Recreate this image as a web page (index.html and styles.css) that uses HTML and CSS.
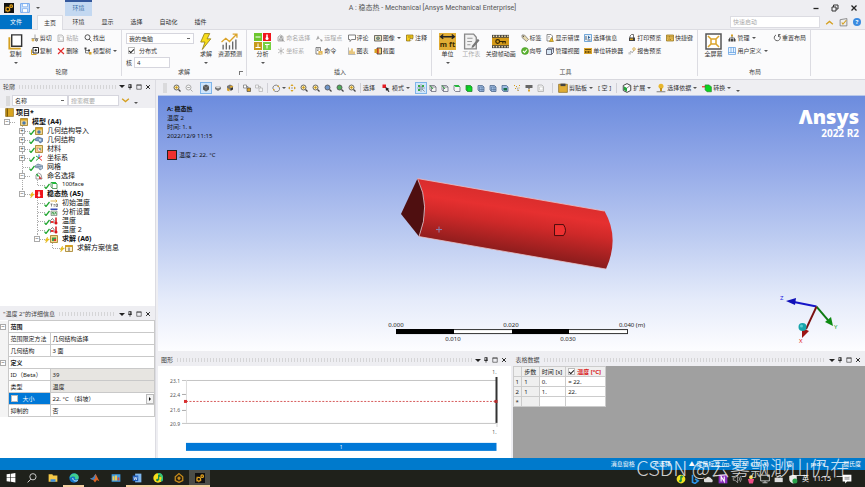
FILE: index.html
```html
<!DOCTYPE html>
<html lang="zh-CN">
<head>
<meta charset="utf-8">
<title>A : 稳态热 - Mechanical</title>
<link rel="stylesheet" href="styles.css">
</head>
<body>
<svg class="sprite" aria-hidden="true">
  <symbol id="app" viewBox="0 0 16 16"><rect width="16" height="16" fill="#111"/><g fill="none" stroke="#e8a51c" stroke-width="2"><circle cx="6" cy="10" r="3"/><circle cx="11.500" cy="5" r="2"/></g><path d="M2 7l2-1M2 13l2-1M6 15v-2M10 12l-1-1" stroke="#e8a51c"/></symbol>
  <symbol id="save" viewBox="0 0 16 16"><path d="M1 1h14v14H1z" fill="#cfe2fb" stroke="#6aa2ee" stroke-width="1.500"/><path d="M4 1h8v5H4zM4 9h8v6H4z" fill="#fff" stroke="#6aa2ee"/></symbol>
  <symbol id="pin" viewBox="0 0 16 16"><path d="M5 1h6v8H5zM3 9h10M8 9v6" fill="none" stroke="#222" stroke-width="2"/><path d="M9 2h2v7H9z" fill="#222"/></symbol>
  <symbol id="max" viewBox="0 0 16 16"><path d="M2 2h12v12H2zM2 3.500h12" fill="none" stroke="#333" stroke-width="1.600"/></symbol>
  <symbol id="close" viewBox="0 0 16 16"><path d="M3 3l10 10M13 3L3 13" stroke="#222" stroke-width="2.600"/></symbol>
  <symbol id="min" viewBox="0 0 16 16"><path d="M3 9h10" stroke="#222" stroke-width="2.600"/></symbol>
  <symbol id="restore" viewBox="0 0 16 16"><path d="M5 6V2h9v8h-4M2 6h8v8H2z" fill="none" stroke="#333" stroke-width="2"/></symbol>
  <symbol id="bigcopy" viewBox="0 0 32 36"><path d="M3 9v24h24" fill="none" stroke="#d5a021" stroke-width="4"/><path d="M8 4h21v24H8z" fill="#fff" stroke="#333" stroke-width="3"/></symbol>
  <symbol id="cut" viewBox="0 0 16 16"><path d="M8 1v8M1 9h14" stroke="#888" stroke-width="1.500"/><circle cx="4" cy="12" r="2" fill="none" stroke="#d5a021" stroke-width="2"/><circle cx="11" cy="12" r="2" fill="none" stroke="#555" stroke-width="2"/></symbol>
  <symbol id="paste" viewBox="0 0 16 16"><path d="M2 2h8l3 3v10H2z" fill="#f4f4f4" stroke="#aaa" stroke-width="1.500"/><path d="M5 6h7v6H5z" fill="#fff" stroke="#bbb"/></symbol>
  <symbol id="find" viewBox="0 0 16 16"><circle cx="7" cy="6.500" r="5" fill="none" stroke="#444" stroke-width="1.800"/><path d="M10.500 10.500L15 15" stroke="#444" stroke-width="2"/></symbol>
  <symbol id="copy" viewBox="0 0 16 16"><path d="M1 5v10h10" fill="none" stroke="#d5a021" stroke-width="2"/><path d="M4 1h11v11H4z" fill="#fff" stroke="#222" stroke-width="2"/><path d="M7 6.500h5M9.500 4v5" stroke="#222" stroke-width="2"/></symbol>
  <symbol id="del" viewBox="0 0 16 16"><path d="M2 3l12 11M14 2L2 14" stroke="#e22b2b" stroke-width="2.200"/></symbol>
  <symbol id="tree" viewBox="0 0 16 16"><path d="M3 4v8h8M3 7h6" fill="none" stroke="#555" stroke-width="1.500"/><path d="M1 1h4v4H1zM8 5h4v4H8z" fill="#444"/><path d="M10 10h5v5h-5z" fill="#d5a021"/></symbol>
  <symbol id="bolt" viewBox="0 0 24 32"><path d="M10 1h10l-5 10h7L6 31l5-14H3z" fill="#f7dc1a" stroke="#8d7a10" stroke-width="1.500"/></symbol>
  <symbol id="forecast" viewBox="0 0 32 32"><path d="M4 31V22M10 31V18M16 31V23M22 31V16M28 31V12" stroke="#666" stroke-width="2.500"/><path d="M1 17l8-7 7 6L29 3M22 2h8v7" fill="none" stroke="#dba42b" stroke-width="2.500"/></symbol>
  <symbol id="analysis" viewBox="0 0 34 34"><path d="M0 0h16v16H0z" fill="#6cc62e"/><path d="M18 0h16v16H18z" fill="#f0151c"/><path d="M0 18h16v16H0z" fill="#c79a1a"/><path d="M18 18h16v16H18z" fill="#76d042"/><path d="M3 8h10M22 23h9M26 23v8M3 29h10M8 21v8" stroke="#fff" stroke-width="2"/><path d="M26 3v7" stroke="#fff" stroke-width="3"/><circle cx="26" cy="11" r="3" fill="#fff"/></symbol>
  <symbol id="named" viewBox="0 0 16 16"><path d="M2 14V6l5-4 5 3v9z" fill="#eee" stroke="#999" stroke-width="1.500"/><path d="M5 12l3-8 3 8zM10 12l5 3" fill="none" stroke="#888" stroke-width="1.500"/></symbol>
  <symbol id="axes" viewBox="0 0 16 16"><path d="M8 1v14M2 4l12 8M14 4L2 12" stroke="#aaa" stroke-width="1.500"/></symbol>
  <symbol id="remote" viewBox="0 0 16 16"><path d="M2 12L6 3l3 6z" fill="#aaa"/><path d="M9 9l4 4" stroke="#999"/><circle cx="13" cy="13" r="2" fill="#999"/></symbol>
  <symbol id="cmd" viewBox="0 0 16 16"><path d="M2 1h9v13H2z" fill="#fff" stroke="#555" stroke-width="1.400"/><path d="M4 4h5M4 7h3" stroke="#555" stroke-width="1.400"/><path d="M7 8h8v7H7z" fill="#e0ad3a"/><path d="M9 10h4M9 13h4" stroke="#fff"/></symbol>
  <symbol id="comment" viewBox="0 0 16 16"><path d="M1 2h14v9H7l-3 4v-4H1z" fill="#fff" stroke="#555" stroke-width="1.500"/></symbol>
  <symbol id="chart" viewBox="0 0 16 16"><path d="M1 1v14h14" fill="none" stroke="#777"/><path d="M4 14V7M8 14V3M12 14V9" stroke="#dba42b" stroke-width="2.400"/></symbol>
  <symbol id="camera" viewBox="0 0 16 16"><path d="M1 3h14v11H1z" fill="#eee3bd" stroke="#444" stroke-width="1.500"/><circle cx="8" cy="8.500" r="3.500" fill="#3d6b8c"/><path d="M8 6v5M5.500 8.500h5" stroke="#e7c552"/></symbol>
  <symbol id="section" viewBox="0 0 16 16"><path d="M6 2h9v12H6z" fill="#f0d27a" stroke="#222" stroke-width="1.500"/><path d="M1 4h5v8H1z" fill="#d5a021"/><path d="M8 3v10" stroke="#c00" stroke-width="2"/></symbol>
  <symbol id="note" viewBox="0 0 16 16"><path d="M1 2h13v7l-6 5H1z" fill="#f5cd1f" stroke="#7c5d00" stroke-width="1.300"/><path d="M4 6h7M8 14V9h6" stroke="#5f4700" fill="#fff"/></symbol>
  <symbol id="units" viewBox="0 0 32 32"><path d="M0 0h32v32H0z" fill="#e1ad35"/><path d="M4 7h24M8 3L3 7l5 4M24 3l5 4-5 4" fill="none" stroke="#222" stroke-width="2.500"/></symbol>
  <symbol id="sheet" viewBox="0 0 32 32"><path d="M3 2h17l5 6v22H3z" fill="#f2f2f2" stroke="#888" stroke-width="2.500"/><path d="M8 10h10M8 16h9M8 22h6" stroke="#999" stroke-width="2"/><path d="M17 24L28 11l3 3-11 13-4 1z" fill="#777"/></symbol>
  <symbol id="film" viewBox="0 0 36 28"><path d="M0 0h36v28H0z" fill="#444"/><path d="M0 6h36v16H0z" fill="#d69b18"/><path d="M2 3h34M2 25h34" stroke="#f3dfaa" stroke-width="3" stroke-dasharray="3 3"/><circle cx="12" cy="14" r="4" fill="none" stroke="#332500" stroke-width="2.500"/><path d="M16 14h12v4M23 14v4" fill="none" stroke="#332500" stroke-width="2.500"/></symbol>
  <symbol id="tag" viewBox="0 0 16 16"><path d="M2 2l5 0 8 9-4 4-9-8z" fill="#e7d9ad" stroke="#777" stroke-width="1.500"/><circle cx="5" cy="5" r="1.300" fill="#555"/></symbol>
  <symbol id="ok" viewBox="0 0 16 16"><circle cx="8" cy="8" r="7" fill="#5cb531" stroke="#3a8a1d"/><path d="M4 8l3 3 5-6" fill="none" stroke="#fff" stroke-width="2.200"/></symbol>
  <symbol id="err" viewBox="0 0 16 16"><path d="M2 1h8l3 3v10H2z" fill="#fff" stroke="#666" stroke-width="1.400"/><path d="M4 5h4M4 8h3" stroke="#777"/><path d="M11 7l4 8H7z" fill="#f0c030" stroke="#8a6a00"/></symbol>
  <symbol id="view" viewBox="0 0 16 16"><path d="M1 5l4-3h10v9l-4 4H1z" fill="#d8e7f5" stroke="#445" stroke-width="1.500"/><path d="M1 5h10v10M11 5l4-3" fill="none" stroke="#445" stroke-width="1.500"/></symbol>
  <symbol id="info" viewBox="0 0 16 16"><path d="M1 1h14v14H1z" fill="#e4f0fc" stroke="#3e87c8" stroke-width="1.400"/><path d="M4 4v8M7 12h6" stroke="#333" stroke-width="1.500"/><path d="M8 3l5 5-3 0-2 3z" fill="#245c96"/></symbol>
  <symbol id="conv" viewBox="0 0 16 16"><path d="M0 2h16v12H0z" fill="#dba42b"/><path d="M2 5h12M3 8v4M6 8v4M9 8v4M12 8v4" stroke="#4a3500" stroke-width="1.500"/></symbol>
  <symbol id="print" viewBox="0 0 16 16"><path d="M4 8V4l3-3h4v7" fill="#fff" stroke="#444" stroke-width="1.500"/><path d="M2 7h12v7H2z" fill="#444"/><path d="M4 9h6v3H4z" fill="#d5a021"/></symbol>
  <symbol id="report" viewBox="0 0 16 16"><path d="M2 14l3-5 4 2 3-5" fill="none" stroke="#888" stroke-width="1.500"/><circle cx="12" cy="4" r="2.500" fill="none" stroke="#d5a021" stroke-width="1.500"/><path d="M1 10h5v5H1z" fill="#ccc"/></symbol>
  <symbol id="keys" viewBox="0 0 16 16"><path d="M1 2h14v12H1z" fill="#e8bd55" stroke="#8a6a10" stroke-width="1.400"/><path d="M3 5h10M3 8h10M5 11h6" stroke="#654b00" stroke-dasharray="2 1"/></symbol>
  <symbol id="full" viewBox="0 0 34 34"><path d="M2 2h30v30H2z" fill="#fff" stroke="#555" stroke-width="3"/><path d="M12 12h10v10H12zM6 6l6 6M28 6l-6 6M6 28l6-6M28 28l-6-6" fill="none" stroke="#dba42b" stroke-width="3"/></symbol>
  <symbol id="manage" viewBox="0 0 16 16"><path d="M6 1h4v4H6z" fill="#d5a021"/><path d="M8 5v4M3 12V8h10v4" fill="none" stroke="#444" stroke-width="1.500"/><path d="M1 10h4v5H1zM6 10h4v5H6zM11 10h4v5h-4z" fill="#444"/></symbol>
  <symbol id="layout" viewBox="0 0 16 16"><path d="M1 1h14v14H1zM1 11h14M6 1v10M11 1v10" fill="#eaf4ff" stroke="#5a9be0" stroke-width="1.400"/></symbol>
  <symbol id="reset" viewBox="0 0 16 16"><path d="M6 2a6 6 0 1 0 5 0M11 6V1h4" fill="none" stroke="#555" stroke-width="1.800"/></symbol>
  <symbol id="up" viewBox="0 0 16 16"><path d="M2 11l6-5 6 5" fill="none" stroke="#d5a021" stroke-width="2.400"/></symbol>
  <symbol id="tick" viewBox="0 0 16 16"><path d="M2 3l12-2v13H2z" fill="#eee" stroke="#777" stroke-width="1.400"/><path d="M5 8l2 3 6-7" fill="none" stroke="#d5a021" stroke-width="2"/></symbol>
  <symbol id="zin" viewBox="0 0 16 16"><circle cx="7" cy="7" r="5" fill="#f9e9ae" stroke="#555" stroke-width="1.700"/><path d="M4.500 7h5M7 4.500v5" stroke="#c79212" stroke-width="1.700"/><path d="M11 11l4 4" stroke="#444" stroke-width="2.300"/></symbol>
  <symbol id="zout" viewBox="0 0 16 16"><circle cx="7" cy="7" r="5" fill="#f5f5f5" stroke="#999" stroke-width="1.600"/><path d="M4.500 7h5M11 11l4 4" stroke="#999" stroke-width="1.700"/></symbol>
  <symbol id="zblue" viewBox="0 0 16 16"><circle cx="7" cy="7" r="5" fill="#6d94c8" stroke="#555" stroke-width="1.700"/><path d="M11 11l4 4" stroke="#444" stroke-width="2.300"/></symbol>
  <symbol id="zgreen" viewBox="0 0 16 16"><circle cx="7" cy="7" r="5" fill="#4faa5a" stroke="#555" stroke-width="1.700"/><path d="M11 11l4 4" stroke="#444" stroke-width="2.300"/></symbol>
  <symbol id="cube" viewBox="0 0 16 16"><path d="M8 1l6 3v7l-6 4-6-4V4z" fill="#555"/><path d="M2 4l6 3 6-3M8 7v8" fill="none" stroke="#aaa"/></symbol>
  <symbol id="cubes" viewBox="0 0 16 16"><path d="M2 6l6-2 6 2v4l-6 4-6-4z" fill="#777"/><path d="M2 6l6 3 6-3-6-2z" fill="#ddd"/></symbol>
  <symbol id="cubey" viewBox="0 0 16 16"><path d="M8 1l6 3v5l-6 3-6-3V4z" fill="#777"/><path d="M2 8l5 2v5l-5-2zM10 3l5 2-5 3-3-2z" fill="#dba42b"/><path d="M9 9l5-2v4l-5 3z" fill="#333"/></symbol>
  <symbol id="dupe" viewBox="0 0 16 16"><path d="M1 2h6v6H1zM7 5h3v3" fill="#fff" stroke="#666" stroke-width="1.300"/><path d="M8 8h7v7H8z" fill="#dba42b" stroke="#444" stroke-width="1.300"/></symbol>
  <symbol id="dupeg" viewBox="0 0 16 16"><path d="M1 2h6v6H1zM8 8h7v7H8zM7 5h4v3" fill="#f3f3f3" stroke="#aaa" stroke-width="1.300"/></symbol>
  <symbol id="rotate" viewBox="0 0 16 16"><path d="M2 10a6 6 0 0 1 10-6M14 6a6 6 0 0 1-10 7" fill="none" stroke="#777" stroke-width="1.800"/><path d="M14 2v4h-4zM2 14v-4h4z" fill="#d5a021"/></symbol>
  <symbol id="pan" viewBox="0 0 16 16"><path d="M8 0l3 4H5zM8 16l3-4H5zM0 8l4-3v6zM16 8l-4-3v6z" fill="#d5a021"/><path d="M7 7h2v2H7z" fill="#555"/></symbol>
  <symbol id="pick" viewBox="0 0 16 16"><path d="M1 1h7v7H1z" fill="#e51c23"/><path d="M7 6l8 4-3 1 3 4-2 1-3-4-2 2z" fill="#222"/></symbol>
  <symbol id="selg" viewBox="0 0 16 16"><path d="M2 2h4v4H2zM10 2h4v4h-4zM2 10h4v4H2z" fill="#39a845"/><path d="M8 1v14M1 8h14M10 10l5 5" stroke="#444" stroke-width="1.400" stroke-dasharray="2 1"/></symbol>
  <symbol id="wire" viewBox="0 0 16 16"><path d="M2 3h9l3 3v9H5l-3-3zM2 3l3 3v9M5 6h9" fill="#f4f4f4" stroke="#667" stroke-width="1.500"/><path d="M2 3l6 7" stroke="#39a845" stroke-width="2"/></symbol>
  <symbol id="top" viewBox="0 0 16 16"><path d="M2 3h9l3 3v9H5l-3-3z" fill="#f4f4f4" stroke="#667" stroke-width="1.500"/><path d="M2 2h9l3 4H5z" fill="#21b83a"/></symbol>
  <symbol id="solid" viewBox="0 0 16 16"><path d="M2 3h9l3 3v9H5l-3-3z" fill="#0bdc24" stroke="#267d2d" stroke-width="1.500"/><path d="M2 3l3 3h9M5 6v9" fill="none" stroke="#13962a"/></symbol>
  <symbol id="bluecube" viewBox="0 0 16 16"><path d="M2 3h9l3 3v9H5l-3-3z" fill="#9dbbe2" stroke="#49648a" stroke-width="1.500"/><path d="M5 6h9M5 6v9M5 11h9M10 6v9" stroke="#49648a"/></symbol>
  <symbol id="cyan" viewBox="0 0 16 16"><path d="M2 3h9l3 3v9H5l-3-3z" fill="#9dbbe2" stroke="#49648a" stroke-width="1.500"/><path d="M5 8h7v5H5z" fill="#176e48"/></symbol>
  <symbol id="wand" viewBox="0 0 16 16"><path d="M2 3h2M6 5h2M12 3h2M4 9h2M11 8h2M9 13h2" stroke="#d09a1a" stroke-width="2"/><path d="M8 7l3 7" stroke="#777"/></symbol>
  <symbol id="label" viewBox="0 0 16 16"><path d="M1 2h14v6h-5l-2 3-2-3H1z" fill="#666"/><path d="M6 11h4v4H6z" fill="#dba42b"/></symbol>
  <symbol id="clip" viewBox="0 0 16 16"><path d="M1 2h14v13H1z" fill="#e1ad35" stroke="#7a5b12"/><path d="M4 1h8v4H4z" fill="#444"/></symbol>
  <symbol id="extend" viewBox="0 0 16 16"><path d="M8 1l6 3v8l-6 3-6-3V4z" fill="#fff" stroke="#444" stroke-width="1.600"/><path d="M3 5l5 3v6l-5-3z" fill="#22a43a"/><path d="M8 8l5-4" stroke="#444"/></symbol>
  <symbol id="place" viewBox="0 0 16 16"><circle cx="8" cy="5" r="4" fill="#e8b62c"/><path d="M8 8v5" stroke="#c08c10" stroke-width="3"/><path d="M1 14h14" stroke="#777" stroke-width="1.500"/></symbol>
  <symbol id="convert" viewBox="0 0 16 16"><path d="M0 6h7" stroke="#e33" stroke-width="2"/><path d="M5 3h6l4 3v8H8l-3-3z" fill="#0bd420" stroke="#267d2d"/></symbol>
  <symbol id="proj" viewBox="0 0 16 16"><path d="M1 1h14v14H1z" fill="#d9a520" stroke="#805f0a"/><path d="M4 1v14" stroke="#6a4c00" stroke-width="2"/></symbol>
  <symbol id="model" viewBox="0 0 16 16"><path d="M1 1h14v14H1z" fill="#f1d48a" stroke="#9a7314" stroke-width="1.500"/><path d="M1 2h14v3H1z" fill="#d5a021"/><circle cx="8" cy="10" r="3.500" fill="#4979ac"/></symbol>
  <symbol id="mat" viewBox="0 0 16 16"><path d="M1 1h14v14H1z" fill="#f1d48a" stroke="#9a7314" stroke-width="1.500"/><path d="M4 6l5 1 3 5-5 1z" fill="#fff" stroke="#c55"/><circle cx="10" cy="8" r="2" fill="#5a9"/></symbol>
  <symbol id="geo" viewBox="0 0 16 16"><path d="M1 5l5-3 9 3v6l-5 3-2-4-7-1z" fill="#7c9fcb" stroke="#395a83" stroke-width="1.300"/><circle cx="10" cy="8" r="2" fill="#dce8f6"/></symbol>
  <symbol id="mesh" viewBox="0 0 16 16"><path d="M1 5l5-3 9 3v6l-5 3-2-4-7-1z" fill="#c6d4e5" stroke="#53708f" stroke-width="1.300"/><path d="M1 7h14M6 2v8M10 4v9" stroke="#53708f"/></symbol>
  <symbol id="coord" viewBox="0 0 16 16"><path d="M8 1v7" stroke="#2563d9" stroke-width="2"/><path d="M8 8l6 5M8 8l6-4" stroke="#e33" stroke-width="2"/><path d="M8 8l-6 5M8 8L2 4" stroke="#28a745" stroke-width="2"/></symbol>
  <symbol id="nsel" viewBox="0 0 16 16"><path d="M2 14V6l5-4 5 3 2 9z" fill="#fff" stroke="#777" stroke-width="1.500"/><path d="M3 4l4 5" stroke="#22a43a" stroke-width="2.500"/><path d="M8 7l6 7H8z" fill="#c44"/></symbol>
  <symbol id="face" viewBox="0 0 16 16"><path d="M2 3h9l3 3v9H5l-3-3z" fill="#fff" stroke="#287c32" stroke-width="1.500"/><path d="M2 2h9l3 4H5z" fill="#21b83a"/><path d="M5 6v9" stroke="#287c32"/></symbol>
  <symbol id="therm" viewBox="0 0 16 16"><path d="M0 0h16v16H0z" fill="#f0151c"/><path d="M8 3v7" stroke="#fff" stroke-width="3"/><circle cx="8" cy="11" r="2.500" fill="#fff"/></symbol>
  <symbol id="init" viewBox="0 0 16 16"><path d="M1 4h13M11 1l3 3-3 3" fill="none" stroke="#d5a021" stroke-width="1.500"/><path d="M1 10h4M3 10v5M7 11h3M7 14h3M12 10h3v5h-3z" fill="none" stroke="#555" stroke-width="1.300"/></symbol>
  <symbol id="settings" viewBox="0 0 16 16"><path d="M1 1h14v3H1z" fill="#3548b8"/><path d="M2 6h12v9H2z" fill="#dff0dd" stroke="#555"/><path d="M4 13V9h3v4M9 13l2-5 2 5" fill="none" stroke="#2f8f3b" stroke-width="1.500"/></symbol>
  <symbol id="temp" viewBox="0 0 16 16"><path d="M1 13V7l4-4 3 4v6" fill="#fff" stroke="#555" stroke-width="1.500"/><path d="M2 8h5v4H2z" fill="#e33"/><path d="M12 1v9" stroke="#d9151b" stroke-width="3"/><circle cx="12" cy="12" r="3" fill="#d9151b"/></symbol>
  <symbol id="sol" viewBox="0 0 16 16"><path d="M1 1h14v14H1z" fill="#f1d48a" stroke="#9a7314" stroke-width="1.500"/><path d="M4 5h8v7H4z" fill="#3d9c50"/><path d="M8 8h4v4H8z" fill="#d33"/></symbol>
  <symbol id="solinfo" viewBox="0 0 16 16"><path d="M1 3h14v12H1z" fill="#fff3cf" stroke="#9a7314" stroke-width="1.500"/><path d="M1 2h14v4H1z" fill="#d5a021"/><path d="M8 7v7" stroke="#556" stroke-width="2"/></symbol>
  <symbol id="chk" viewBox="0 0 12 12"><path d="M1 7l3 4 7-9" fill="none" stroke="#1fa52f" stroke-width="2.500"/></symbol>
  <symbol id="zap" viewBox="0 0 12 12"><path d="M7 0L2 7h3l-2 5 8-8H7z" fill="#f3c40f" stroke="#c99a00" stroke-width=".6"/></symbol>
</svg>

<header class="titlebar">
  <div class="quick">
    <svg class="i10"><use href="#app"/></svg>
    <button class="plain" aria-label="保存"><svg class="i10"><use href="#save"/></svg></button>
    <span class="caret"></span>
  </div>
  <div class="context">环境</div>
  <h1>A : 稳态热 - Mechanical [Ansys Mechanical Enterprise]</h1>
  <div class="winbtns">
    <button class="plain" aria-label="最小化"><svg class="i8"><use href="#min"/></svg></button>
    <button class="plain" aria-label="还原"><svg class="i8"><use href="#restore"/></svg></button>
    <button class="plain" aria-label="关闭"><svg class="i8"><use href="#close"/></svg></button>
  </div>
</header>

<nav class="tabs">
  <button class="tab file">文件</button>
  <button class="tab active">主页</button>
  <button class="tab">环境</button>
  <button class="tab">显示</button>
  <button class="tab">选择</button>
  <button class="tab">自动化</button>
  <button class="tab">插件</button>
  <div class="tabtools">
    <input class="launch" type="text" placeholder="快速启动" aria-label="快速启动">
    <svg class="i9"><use href="#up"/></svg>
    <svg class="i9"><use href="#tick"/></svg>
    <button class="plain help" aria-label="帮助">?</button>
  </div>
</nav>

<section class="ribbon">
  <div class="group g-outline">
    <div class="tools">
      <button class="big"><svg class="i17"><use href="#bigcopy"/></svg>复制<span class="caret"></span></button>
      <div class="stack"><button class="cmd"><svg class="i8"><use href="#cut"/></svg>剪切</button><button class="cmd"><svg class="i8"><use href="#copy"/></svg>复制</button></div>
      <div class="stack"><button class="cmd off"><svg class="i8"><use href="#paste"/></svg>粘贴</button><button class="cmd"><svg class="i8"><use href="#del"/></svg>删除</button></div>
      <div class="stack"><button class="cmd"><svg class="i8"><use href="#find"/></svg>找出</button><button class="cmd"><svg class="i8"><use href="#tree"/></svg>模型树<span class="caret"></span></button></div>
    </div>
    <div class="caption">轮廓</div>
  </div>
  <div class="group g-solve">
    <div class="tools">
      <div class="form">
        <select aria-label="求解位置"><option>我的电脑</option></select>
        <label class="dist"><input class="box" type="checkbox" checked>分布式</label>
        <label class="cores">核<input type="text" value="4"></label>
      </div>
      <button class="big"><svg class="i17"><use href="#bolt"/></svg>求解<span class="caret"></span></button>
      <button class="big"><svg class="i17"><use href="#forecast"/></svg>资源预测</button>
    </div>
    <div class="caption launcher">求解</div>
  </div>
  <div class="group g-insert">
    <div class="tools">
      <button class="big"><svg class="i17"><use href="#analysis"/></svg>分析<span class="caret"></span></button>
      <div class="stack"><button class="cmd off"><svg class="i8"><use href="#named"/></svg>命名选择</button><button class="cmd off"><svg class="i8"><use href="#axes"/></svg>坐标系</button></div>
      <div class="stack"><button class="cmd off"><svg class="i8"><use href="#remote"/></svg>远程点</button><button class="cmd"><svg class="i8"><use href="#cmd"/></svg>命令</button></div>
      <div class="stack"><button class="cmd"><svg class="i8"><use href="#comment"/></svg>评论</button><button class="cmd"><svg class="i8"><use href="#chart"/></svg>图表</button></div>
      <div class="stack"><button class="cmd"><svg class="i8"><use href="#camera"/></svg>图像<span class="caret"></span></button><button class="cmd"><svg class="i8"><use href="#section"/></svg>截面</button></div>
      <div class="stack"><button class="cmd"><svg class="i8"><use href="#note"/></svg>注释</button></div>
    </div>
    <div class="caption">插入</div>
  </div>
  <div class="group g-tools">
    <div class="tools">
      <button class="big"><svg class="i17" viewBox="0 0 32 32"><use href="#units"/><text x="16" y="27" class="mft">m ft</text></svg>单位<span class="caret"></span></button>
      <button class="big off"><svg class="i17"><use href="#sheet"/></svg>工作表</button>
      <button class="big"><svg class="i17"><use href="#film"/></svg>关键帧动画</button>
      <div class="stack"><button class="cmd"><svg class="i8"><use href="#tag"/></svg>标签</button><button class="cmd"><svg class="i8"><use href="#ok"/></svg>向导</button></div>
      <div class="stack"><button class="cmd"><svg class="i8"><use href="#err"/></svg>显示错误</button><button class="cmd"><svg class="i8"><use href="#view"/></svg>管理视图</button></div>
      <div class="stack"><button class="cmd"><svg class="i8"><use href="#info"/></svg>选择信息</button><button class="cmd"><svg class="i8"><use href="#conv"/></svg>单位转换器</button></div>
      <div class="stack"><button class="cmd"><svg class="i8"><use href="#print"/></svg>打印预览</button><button class="cmd"><svg class="i8"><use href="#report"/></svg>报告预览</button></div>
      <div class="stack"><button class="cmd"><svg class="i8"><use href="#keys"/></svg>快捷键</button></div>
    </div>
    <div class="caption">工具</div>
  </div>
  <div class="group g-layout">
    <div class="tools">
      <button class="big"><svg class="i17"><use href="#full"/></svg>全屏幕</button>
      <div class="stack"><button class="cmd"><svg class="i8"><use href="#manage"/></svg>管理<span class="caret"></span></button><button class="cmd"><svg class="i8"><use href="#layout"/></svg>用户定义<span class="caret"></span></button></div>
      <div class="stack"><button class="cmd"><svg class="i8"><use href="#reset"/></svg>重置布局</button></div>
    </div>
    <div class="caption">布局</div>
  </div>
</section>

<main class="work">
  <aside class="side">
    <section class="panel outline">
      <div class="phead"><h2>轮廓</h2><i class="dots"></i><span class="caret"></span><svg class="i8"><use href="#pin"/></svg><svg class="i8"><use href="#max"/></svg><svg class="i8"><use href="#close"/></svg></div>
      <div class="filter">
        <i class="grip"></i>
        <select aria-label="筛选"><option>名称</option></select>
        <input type="text" placeholder="搜索概要" aria-label="搜索概要">
        <svg class="i9 flip"><use href="#up"/></svg>
        <span class="caret"></span>
      </div>
      <div class="project"><svg class="i9"><use href="#proj"/></svg><b>项目*</b></div>
      <ul class="nodes root">
        <li><div class="row"><i class="exp">−</i><i class="st"></i><svg class="i8"><use href="#model"/></svg><b>模型 (A4)</b></div>
          <ul class="nodes">
            <li><div class="row"><i class="exp">+</i><svg class="st"><use href="#chk"/></svg><svg class="i8"><use href="#model"/></svg>几何结构导入</div></li>
            <li><div class="row"><i class="exp">+</i><svg class="st"><use href="#chk"/></svg><svg class="i8"><use href="#geo"/></svg>几何结构</div></li>
            <li><div class="row"><i class="exp">+</i><svg class="st"><use href="#chk"/></svg><svg class="i8"><use href="#mat"/></svg>材料</div></li>
            <li><div class="row"><i class="exp">+</i><svg class="st"><use href="#chk"/></svg><svg class="i8"><use href="#coord"/></svg>坐标系</div></li>
            <li><div class="row"><i class="exp leaf"></i><svg class="st"><use href="#chk"/></svg><svg class="i8"><use href="#mesh"/></svg>网格</div></li>
            <li><div class="row"><i class="exp">−</i><i class="st"></i><svg class="i8"><use href="#nsel"/></svg>命名选择</div>
              <ul class="nodes">
                <li><div class="row"><i class="exp leaf"></i><svg class="st"><use href="#chk"/></svg><svg class="i8"><use href="#face"/></svg><span class="latin">100face</span></div></li>
              </ul>
            </li>
            <li><div class="row"><i class="exp">−</i><svg class="st"><use href="#zap"/></svg><svg class="i8"><use href="#therm"/></svg><b>稳态热 (A5)</b></div>
              <ul class="nodes">
                <li><div class="row"><i class="exp leaf"></i><svg class="st"><use href="#chk"/></svg><svg class="i8"><use href="#init"/></svg>初始温度</div></li>
                <li><div class="row"><i class="exp leaf"></i><svg class="st"><use href="#chk"/></svg><svg class="i8"><use href="#settings"/></svg>分析设置</div></li>
                <li><div class="row"><i class="exp leaf"></i><svg class="st"><use href="#chk"/></svg><svg class="i8"><use href="#temp"/></svg>温度</div></li>
                <li><div class="row"><i class="exp leaf"></i><svg class="st"><use href="#chk"/></svg><svg class="i8"><use href="#temp"/></svg>温度 2</div></li>
                <li><div class="row"><i class="exp">−</i><svg class="st"><use href="#zap"/></svg><svg class="i8"><use href="#sol"/></svg><b>求解 (A6)</b></div>
                  <ul class="nodes">
                    <li><div class="row"><i class="exp leaf"></i><svg class="st"><use href="#zap"/></svg><svg class="i8"><use href="#solinfo"/></svg>求解方案信息</div></li>
                  </ul>
                </li>
              </ul>
            </li>
          </ul>
        </li>
      </ul>
    </section>
    <section class="panel details">
      <div class="phead"><h2>"温度 2"的详细信息</h2><i class="dots"></i><span class="caret"></span><svg class="i8"><use href="#pin"/></svg><svg class="i8"><use href="#max"/></svg><svg class="i8"><use href="#close"/></svg></div>
      <table class="props">
        <colgroup><col class="c-gut"><col class="c-key"><col></colgroup>
        <tr><td class="gut"><i class="exp">−</i></td><th colspan="2">范围</th></tr>
        <tr><td class="gut"></td><td>范围限定方法</td><td>几何结构选择</td></tr>
        <tr><td class="gut"></td><td>几何结构</td><td>3 面</td></tr>
        <tr><td class="gut"><i class="exp">−</i></td><th colspan="2">定义</th></tr>
        <tr><td class="gut"></td><td>ID（Beta）</td><td class="ro">39</td></tr>
        <tr><td class="gut"></td><td>类型</td><td class="ro">温度</td></tr>
        <tr><td class="gut"></td><td class="sel"><label><input class="box" type="checkbox">大小</label></td><td><div class="val">22. °C （斜坡）<button class="more" aria-label="更多"></button></div></td></tr>
        <tr><td class="gut"></td><td>抑制的</td><td>否</td></tr>
      </table>
    </section>
  </aside>

  <div class="stage">
    <div class="toolbar">
      <i class="grip"></i>
      <svg class="tb"><use href="#zin"/></svg><svg class="tb"><use href="#zout"/></svg>
      <i class="gap"></i>
      <svg class="tb on"><use href="#cube"/></svg><svg class="tb"><use href="#cubes"/></svg><svg class="tb"><use href="#cubey"/></svg>
      <i class="sep"></i>
      <svg class="tb"><use href="#dupe"/></svg><svg class="tb"><use href="#dupeg"/></svg>
      <i class="sep"></i>
      <svg class="tb"><use href="#rotate"/></svg><span class="caret"></span><svg class="tb"><use href="#pan"/></svg><svg class="tb"><use href="#zin"/></svg><svg class="tb"><use href="#zin"/></svg><svg class="tb"><use href="#zblue"/></svg><svg class="tb"><use href="#zgreen"/></svg><svg class="tb"><use href="#zin"/></svg>
      <i class="sep"></i>
      <span>选择</span><i class="gap"></i><svg class="tb"><use href="#pick"/></svg><button class="cmd">模式<span class="caret"></span></button>
      <i class="gap"></i>
      <svg class="tb on"><use href="#selg"/></svg><svg class="tb"><use href="#wire"/></svg><svg class="tb"><use href="#wire"/></svg><svg class="tb"><use href="#top"/></svg><svg class="tb"><use href="#solid"/></svg><svg class="tb"><use href="#bluecube"/></svg><svg class="tb"><use href="#bluecube"/></svg><svg class="tb"><use href="#cyan"/></svg><svg class="tb"><use href="#wand"/></svg><svg class="tb"><use href="#label"/></svg><svg class="tb"><use href="#paste"/></svg>
      <i class="sep wide"></i>
      <button class="cmd"><svg class="i10"><use href="#clip"/></svg>剪贴板<span class="caret"></span></button>
      <i class="gap"></i><span>[ 空 ]</span>
      <i class="sep wide"></i>
      <button class="cmd"><svg class="i10"><use href="#extend"/></svg>扩展<span class="caret"></span></button>
      <i class="gap"></i>
      <button class="cmd"><svg class="i10"><use href="#place"/></svg>选择依据<span class="caret"></span></button>
      <i class="gap"></i>
      <button class="cmd"><svg class="i10"><use href="#convert"/></svg>转换<span class="caret"></span></button>
      <i class="gap"></i><span class="caret low"></span>
    </div>

    <div class="viewport">
      <svg class="scene" viewBox="158 96 707 255">
        <defs>
          <linearGradient id="body" gradientUnits="userSpaceOnUse" x1="515" y1="194" x2="506" y2="253">
            <stop offset="0" stop-color="#d92d2d"/><stop offset=".25" stop-color="#e63030"/><stop offset=".5" stop-color="#cf2929"/><stop offset="1" stop-color="#8a1c1c"/>
          </linearGradient>
        </defs>
        <path d="M417.500 178.500L604.500 211Q620 238 606 269L419 236.500Q431 206 417.500 178.500Z" fill="url(#body)"/>
        <path d="M417.500 178.500L401 214L419 236.500Q431 206 417.500 178.500Z" fill="#4f0f10"/>
        <path d="M606 269L419 236.500Q431 206 417.500 178.500L604.500 211" fill="none" stroke="#e9c3c8" stroke-width=".8"/>
        <path d="M554.500 224.500h9q4 6 0 11h-9z" fill="#ee3131" stroke="#4c0c0c"/>
        <path d="M436 229.500h6M439 226.500v6" stroke="#8c7fb0"/>
        <rect x="396.500" y="329.500" width="231" height="4" fill="#fff" stroke="#333"/>
        <path d="M396 329h58v5h-58zM512 329h57v5h-57z"/>
        <g class="scale"><text x="396" y="327">0.000</text><text x="511" y="327">0.020</text><text x="632" y="327">0.040 (m)</text><text x="453" y="341">0.010</text><text x="568" y="341">0.030</text></g>
        <path d="M816.500 306.500L794 302" stroke="#1515c8" stroke-width="2"/><path d="M786 301l10-3-1 7z" fill="#1010b8"/>
        <path d="M816.500 306.500L828 320" stroke="#0d7a12" stroke-width="2"/><path d="M833 326l-8-4 6-5z" fill="#0d8a12"/>
        <path d="M816.500 306.500L806 329" stroke="#7a1010" stroke-width="2"/><path d="M802 338l0-10 7 3z" fill="#9c1414"/>
        <circle cx="802.500" cy="327" r="4" fill="#17a5ac"/><circle cx="801.500" cy="326" r="1.500" fill="#58cdd0"/>
        <g class="axis"><text x="780" y="300" fill="#2222e0">Z</text><text x="834" y="329" fill="#18a018">Y</text><text x="799" y="343" fill="#e02020">X</text></g>
      </svg>
      <div class="legend">
        <b>A: 稳态热</b><span>温度 2</span><span>时间: 1. s</span><span>2022/12/9 11:15</span>
        <div class="swatch"><i></i>温度 2: 22. °C</div>
      </div>
      <div class="brand"><strong>Λnsys</strong><span>2022 R2</span></div>
    </div>

    <div class="bottom">
      <section class="panel graph">
        <div class="phead"><h2>图形</h2><i class="dots"></i><span class="caret"></span><svg class="i8"><use href="#pin"/></svg><svg class="i8"><use href="#max"/></svg><svg class="i8"><use href="#close"/></svg></div>
        <svg class="plot" viewBox="158 366 353 92">
          <path d="M182 380.500h315M182 423.500h315" stroke="#c4c4c4"/>
          <path d="M182 394.500h4M182 410.500h4" stroke="#aaa"/><path d="M186.500 380v43" stroke="#ddd"/>
          <path d="M186 401.500h311" stroke="#d65a5a" stroke-dasharray="2 1.500"/>
          <rect x="184" y="400" width="3" height="3" fill="#d83030"/>
          <rect x="496" y="377" width="2" height="46" fill="#333"/><path d="M497.500 423v4" stroke="#ccc"/>
          <rect x="495" y="400" width="3" height="3" fill="#b02a2a"/>
          <rect x="186" y="443" width="311" height="8" fill="#0078d7"/>
          <g class="ticks"><text x="180" y="383">23.1</text><text x="180" y="397">22.4</text><text x="180" y="412">21.6</text><text x="180" y="426">20.9</text><text x="497" y="374">1.</text><text x="497" y="434">1.</text><text x="343" y="449" fill="#fff">1</text></g>
        </svg>
      </section>
      <section class="panel tabular">
        <div class="phead"><h2>表格数据</h2><i class="dots"></i><span class="caret"></span><svg class="i8"><use href="#pin"/></svg><svg class="i8"><use href="#max"/></svg><svg class="i8"><use href="#close"/></svg></div>
        <table class="data">
          <tr><th></th><th>步数</th><th>时间 [s]</th><th class="hot"><label><input class="box" type="checkbox" checked>温度 [°C]</label></th></tr>
          <tr><th>1</th><td class="ro">1</td><td>0.</td><td>= 22.</td></tr>
          <tr><th>2</th><td class="ro">1</td><td>1.</td><td>22.</td></tr>
          <tr><th>*</th><td class="ro"></td><td></td><td></td></tr>
        </table>
      </section>
    </div>
  </div>
</main>

<footer class="status"><span>消息窗格</span><span>无选择</span><span>▲ 度量标准 (m, kg, N, s, V, A)</span><span>度</span><span>rad/s</span><span>摄氏度</span></footer>

<div class="taskbar">
  <button class="app" aria-label="开始"><svg class="i10" viewBox="0 0 16 16"><path d="M1 2l6-1v6H1zM8 1l7-1v7H8zM1 8h6v6l-6-1zM8 8h7v7l-7-1z" fill="#fff"/></svg></button>
  <button class="app" aria-label="搜索"><svg class="i10" viewBox="0 0 16 16"><circle cx="9.500" cy="6" r="5" fill="none" stroke="#ddd" stroke-width="1.400"/><path d="M6 10l-5 5" stroke="#ddd" stroke-width="1.500"/></svg></button>
  <button class="app" aria-label="资源管理器"><svg class="i10" viewBox="0 0 16 16"><path d="M1 2h6l1 2h7v10H1z" fill="#f5c948"/><path d="M4 10h8v4H4z" fill="#3b8ede"/></svg></button>
  <button class="app run" aria-label="Edge"><svg class="i10" viewBox="0 0 16 16"><circle cx="8" cy="8" r="7.500" fill="#1477c9"/><path d="M1 8C2-2 16-1 15.500 7c0 4-5 4-6 2 2-4-5-5-8.500-1z" fill="#41cf8e"/><path d="M6 8c0 4 4 6 8 4" fill="none" stroke="#cdefff" stroke-width="1.500"/></svg></button>
  <button class="app" aria-label="MATLAB"><svg class="i10" viewBox="0 0 16 16"><path d="M0 9l5-2 4-6 6 12-4-2-3 4-3-4z" fill="#dc6428"/><path d="M0 9l5-2 4-6-1 8-3 2z" fill="#3b82c4"/></svg></button>
  <button class="app" aria-label="图表工具"><svg class="i10" viewBox="0 0 16 16"><path d="M1 2h14v12H1z" fill="#3f9ee6"/><path d="M4 12V5M8 12V4" stroke="#f3cb52" stroke-width="3"/><path d="M12 12V7" stroke="#d84b37" stroke-width="3"/></svg></button>
  <button class="app run" aria-label="Word"><svg class="i10" viewBox="0 0 16 16"><path d="M5 1h10v14H5z" fill="#7fb7ee"/><path d="M1 4h9v9H1z" fill="#1c5bb8"/><path d="M3 6l1 5 1.500-4L7 11l1-5" fill="none" stroke="#fff"/></svg></button>
  <button class="app run" aria-label="音乐"><svg class="i10" viewBox="0 0 16 16"><circle cx="8" cy="8" r="7.500" fill="#f6de1c"/><path d="M8 1a7 7 0 0 1 5 12" fill="none" stroke="#31c27c" stroke-width="3"/><path d="M9 3v8M9 3l3 3" stroke="#178a4c" stroke-width="2"/><circle cx="7" cy="11" r="2" fill="#178a4c"/></svg></button>
  <button class="app run" aria-label="Workbench"><svg class="i10" viewBox="0 0 16 16"><path d="M8 1l6 5v6l-6 3-6-3V6z" fill="#2b2210" stroke="#c98d1c" stroke-width="2"/><path d="M5 8l3-3 3 3-3 4z" fill="#c98d1c"/></svg></button>
  <button class="app run now" aria-label="Mechanical"><svg class="i10"><use href="#app"/></svg></button>
  <div class="tray">
    <svg class="i10" viewBox="0 0 16 16"><circle cx="8" cy="8" r="7" fill="#f2e41e"/><path d="M8 3v8M8 3l3 2" stroke="#178a4c" stroke-width="2.500"/><circle cx="7" cy="11" r="2" fill="#178a4c"/></svg>
    <svg class="i10" viewBox="0 0 16 16"><path d="M4 1v12l4 2 5-4-5-3" fill="none" stroke="#2a93e8" stroke-width="2.600"/></svg>
    <svg class="i10" viewBox="0 0 16 16"><path d="M2 13a3 3 0 0 1 1-6 5 5 0 0 1 9 1 3 3 0 0 1 1 5z" fill="#ddd"/></svg>
    <svg class="i10" viewBox="0 0 16 16"><path d="M1 1h14v14H1z" fill="#8a2ebd"/><path d="M5 12V4l5 8V4" fill="none" stroke="#fff" stroke-width="1.800"/></svg>
    <svg class="i10" viewBox="0 0 16 16"><path d="M2 6h3l4-4v12l-4-4H2zM11 5q3 3 0 6M13 3q4 5 0 10" fill="none" stroke="#aaa" stroke-width="1.300"/></svg>
    <svg class="i10" viewBox="0 0 16 16"><circle cx="8" cy="5" r="3" fill="#fadc5b"/><path d="M3 8h10l-2 7H5z" fill="#ef4d88"/></svg>
    <svg class="i10" viewBox="0 0 16 16"><path d="M1 2h14v9H1zM8 11v3M4 14h8" fill="none" stroke="#ccc" stroke-width="1.500"/></svg>
    <svg class="i10" viewBox="0 0 16 16"><path d="M1 6h13v7H1z" fill="#ddd"/><path d="M4 5l7-3" stroke="#ddd" stroke-width="2"/></svg>
    <svg class="i10" viewBox="0 0 16 16"><path d="M8 1l6 2v5q0 5-6 7-6-2-6-7V3z" fill="#eee"/><circle cx="11" cy="11" r="4" fill="#2aa24a"/></svg>
    <span>英</span><time>11:15</time>
    <svg class="i10" viewBox="0 0 16 16"><path d="M1 1h14v11H8l-3 3v-3H1z" fill="#fff"/><path d="M4 5h8M4 8h8" stroke="#333"/></svg>
  </div>
</div>
<div class="watermark">CSDN @云雾飘渺山仍在</div>
</body>
</html>
```
FILE: styles.css
```css
* { box-sizing: border-box; }
body {
  margin: 0;
  min-height: 100vh;
  display: flex;
  flex-direction: column;
  overflow: hidden;
  background: #eeeef2;
  color: #333;
  font: 6px/8px "Noto Sans", "Noto Sans CJK SC", sans-serif;
}
h1, h2 { margin: 0; font-weight: 400; }
i { font-style: normal; }
svg { display: block; flex: none; }
button, input, select { font: inherit; color: inherit; margin: 0; border-radius: 0; }
button { border: 0; padding: 0; background: none; }
.sprite { position: absolute; width: 0; height: 0; }
.i8 { width: 8px; height: 8px; }
.i9 { width: 9px; height: 9px; }
.i10 { width: 10px; height: 10px; }
.i17 { width: 17px; height: 17px; }
.caret {
  display: inline-block;
  flex: none;
  border: 2px solid transparent;
  border-top-color: #555;
  border-bottom-width: 0;
}
.grip { width: 4px; height: 10px; background: radial-gradient(#bbb 1px, transparent 1px) 0 0 / 2px 3px; opacity: .4; }

.titlebar { display: grid; grid-template-columns: 65px 27px 1fr 56px; height: 15px; }
.quick { display: flex; align-items: center; gap: 6px; padding-left: 4px; }
.context { border-top: 2px solid #34589c; background: #c3d8f1; color: #3b6ea8; text-align: center; padding-top: 2px; }
.titlebar h1 { font-family: Roboto, "Noto Sans CJK SC", sans-serif; font-size: 7px; line-height: 16px; color: #555; text-align: center; padding-right: 36px; }
.winbtns { display: flex; align-items: center; gap: 11px; padding-left: 3px; }

.tabs { display: flex; height: 15px; align-items: stretch; border-bottom: 1px solid #dcdce2; }
.tab { padding: 0; line-height: 15px; }
.tab.file { width: 32px; margin-right: 5px; background: #0072c6; color: #fff; }
.tab.active { width: 26px; margin-right: 9px; margin-bottom: -1px; background: #fbfbfc; border: 1px solid #dcdce2; border-bottom: 0; line-height: 13px; }
.tab:nth-child(n+3) { width: 13px; margin-right: 16px; }
.tab:nth-child(6) { width: 19px; }
.tabtools { display: flex; align-items: center; gap: 5px; margin-left: auto; padding-right: 4px; }
.launch { width: 90px; height: 12px; border: 1px solid #dcdce2; background: #fff; padding: 0 2px; }
.launch::placeholder, .filter input::placeholder { color: #aaa; }
.help { width: 8px; height: 8px; border-radius: 4px; background: #3b8be0; color: #fff; font-weight: 700; }

.ribbon { display: flex; height: 50px; background: #fbfbfc; border-bottom: 1px solid #d8d8de; }
.group { display: flex; flex-direction: column; justify-content: space-between; padding: 3px 4px 0 6px; margin-bottom: 3px; border-right: 1px solid #dcdce2; }
.g-outline { width: 122px; }
.g-solve { width: 125px; padding-left: 4px; }
.g-insert { width: 185px; }
.g-tools { width: 266px; }
.g-layout { width: 113px; }
.tools { display: flex; justify-content: space-between; align-items: flex-start; }
.big { display: flex; flex-direction: column; align-items: center; min-width: 19px; white-space: nowrap; }
.big .caret { margin-top: 4px; }
.stack { display: flex; flex-direction: column; gap: 4px; }
.cmd { display: flex; align-items: center; gap: 1px; height: 9px; white-space: nowrap; }
.cmd .caret { margin-left: 1px; }
.off { color: #aaa; }
.caption { text-align: center; line-height: 7px; color: #444; }
.launcher { position: relative; }
.launcher::after { content: ""; position: absolute; right: -1px; top: 2px; width: 3px; height: 3px; border: solid #777; border-width: 1px 0 0 1px; }
.form { display: flex; flex-direction: column; gap: 1px; width: 68px; }
.form select { height: 11px; border: 1px solid #d6d6de; }
.dist, .cores { display: flex; align-items: center; gap: 4px; height: 11px; }
.dist { padding-left: 2px; }
.cores { gap: 2px; }
.cores input { width: 36px; height: 11px; border: 1px solid #d6d6de; background: #fff; padding: 0 2px; }
.mft { font-size: 14px; font-weight: 700; text-anchor: middle; fill: #3c2d00; }
select {
  appearance: none;
  padding: 0 2px;
  background: #fff linear-gradient(#666, #666) right 3px center / 3px 1px no-repeat;
}
.box { appearance: none; width: 7px; height: 7px; border: 1px solid #bbb; background: #fff; display: grid; place-items: center; }
.box:checked::before { content: ""; width: 4px; height: 2px; border: solid #222; border-width: 0 0 1px 1px; rotate: -45deg; }

.work { flex: 1; display: grid; grid-template-columns: 156px 1fr; column-gap: 2px; min-height: 0; }
.panel { display: flex; flex-direction: column; min-width: 0; background: #fff; }
.phead { display: flex; align-items: center; gap: 1px; height: 12px; padding: 0 3px; background: #eeeef2; color: #444; }
.phead h2 { font-size: 6px; white-space: nowrap; }
.dots { flex: 1; height: 4px; margin: 0 2px; background: radial-gradient(#bbb 1px, transparent 1px) 0 0 / 3px 2px; opacity: .5; }
.phead .caret { border-width: 3px; border-bottom-width: 0; border-top-color: #222; }
.phead .i8 { padding: 1px; }

.side { display: flex; flex-direction: column; gap: 2px; border-right: 1px solid #dcdce2; }
.outline { height: 226px; }
.outline .phead { height: 13px; }
.filter { display: flex; align-items: center; height: 15px; padding-left: 6px; background: #eeeef2; }
.filter select { width: 56px; height: 11px; border: 1px solid #d6d6de; margin-left: 2px; }
.filter input { width: 51px; height: 11px; border: 1px solid #d6d6de; padding: 0 2px; margin-right: 2px; }
.filter .caret { margin: 4px 0 0 4px; }
.flip { rotate: 180deg; }
.project { display: flex; align-items: center; gap: 2px; height: 9px; padding-left: 5px; font-size: 7px; color: #111; }
.nodes { list-style: none; margin: 0; padding: 0 0 0 15px; font-size: 7px; line-height: 9px; color: #111; }
.root { padding-left: 4px; }
.nodes li { position: relative; }
.nodes .nodes > li::before { content: ""; position: absolute; left: 3px; top: 0; bottom: 0; border-left: 1px dotted #aaa; }
.nodes .nodes > li:last-child::before { bottom: auto; height: 5px; }
.row { display: flex; align-items: center; height: 9px; white-space: nowrap; }
.row .i8 { margin-right: 4px; }
.row .st { width: 6px; height: 6px; margin-left: 4px; align-self: flex-end; }
.row .exp { position: relative; }
.row .exp::after { content: ""; position: absolute; left: 5px; top: 2px; width: 5px; border-top: 1px dotted #aaa; }
.row .leaf::after { left: 3px; width: 7px; }
.exp { flex: none; display: block; width: 6px; height: 6px; border: 1px solid #aaa; background: #fff; font-size: 6px; line-height: 4px; text-align: center; color: #333; }
.leaf { border-color: transparent; background: none; }
.latin { font-size: 6px; }

.details { flex: 1; }
.props { border-collapse: collapse; table-layout: fixed; width: 100%; }
.c-gut { width: 8px; }
.c-key { width: 42px; }
.props td, .props th { height: 12px; padding: 0 0 0 2px; border: 1px solid #c9c9c9; text-align: left; line-height: 8px; white-space: nowrap; color: #222; }
.props .gut { padding: 0; border: 0; background: #f4f4f4; }
.props .ro { background: #e7e5e1; }
.props .sel { background: #0078d7; color: #fff; }
.sel label { display: flex; align-items: center; gap: 5px; }
.val { display: flex; align-items: center; justify-content: space-between; }
.more { width: 8px; height: 10px; border: 1px solid #bbb; background: #f3f3f3; display: grid; place-items: center; }
.more::before { content: ""; border: 2px solid transparent; border-left-color: #111; border-right-width: 0; }

.stage { display: flex; flex-direction: column; min-width: 0; }
.toolbar { display: flex; align-items: center; height: 16px; padding-left: 5px; white-space: nowrap; border-bottom: 1px solid #b8c8ea; }
.toolbar .grip { margin-right: 4px; }
.tb { width: 12px; height: 12px; padding: 2px; }
.tb.on { background: #cfe5fb; border: 1px solid #7fb5ea; padding: 1px; }
.gap { width: 5px; }
.sep { width: 1px; height: 10px; margin: 0 2px; background: #d0d0d6; }
.sep.wide { margin: 0 5px; }
.low { align-self: flex-end; margin-bottom: 3px; }
.viewport { position: relative; flex: 1; min-height: 0; background: linear-gradient(#6c8cde, #93a9e8 27%, #bccbf1 55%, #e5ebfa 80%, #fdfdff); }
.scene { width: 100%; height: 100%; }
.scale { font-size: 6px; text-anchor: middle; fill: #222; }
.axis { font-size: 6px; }
.legend { position: absolute; left: 9px; top: 9px; display: flex; flex-direction: column; line-height: 9px; color: #111; }
.swatch { display: flex; align-items: center; gap: 2px; margin-top: 9px; }
.swatch i { width: 10px; height: 10px; background: #f03030; border: 1px solid #222; }
.brand { position: absolute; right: 6px; top: 9px; display: flex; flex-direction: column; align-items: flex-end; color: #fff; font-family: "Open Sans", sans-serif; font-weight: 700; }
.brand strong { font-size: 20px; line-height: 23px; }
.brand span { font-size: 10px; line-height: 10px; }

.bottom { display: grid; grid-template-columns: 353fr 353fr; column-gap: 2px; padding-top: 3px; }
.plot { width: 100%; height: auto; }
.ticks { font-size: 5px; text-anchor: end; fill: #555; }
.tabular { background: #a0a0a0; }
.data { border-collapse: collapse; width: 93px; color: #222; }
.data th, .data td { height: 10px; padding: 0 2px; border: 1px solid #ccc; background: #fff; font-weight: 400; text-align: left; line-height: 8px; white-space: nowrap; }
.data th, .data .ro { background: #efefef; }
.data .hot { color: #d92020; font-weight: 700; }
.hot label { display: flex; align-items: center; gap: 2px; }

.status { display: flex; justify-content: flex-end; gap: 18px; height: 12px; padding-right: 4px; line-height: 12px; background: #007acc; color: #fff; white-space: nowrap; }
.taskbar { display: flex; height: 17px; background: #1f211b; color: #fff; }
.app { width: 21px; display: grid; place-items: center; border-bottom: 2px solid transparent; }
.app.run { border-bottom-color: #f3cfa0; }
.app.now { background: #4b4d48; }
.tray { display: flex; align-items: center; gap: 4px; margin-left: auto; padding-right: 13px; font-size: 7px; }
.tray time { margin-right: 7px; }
.watermark { position: absolute; right: 15px; bottom: 7px; font-size: 20px; line-height: 24px; color: #fffc; font-family: "Noto Sans CJK SC", sans-serif; font-weight: 300; white-space: nowrap; }
```
